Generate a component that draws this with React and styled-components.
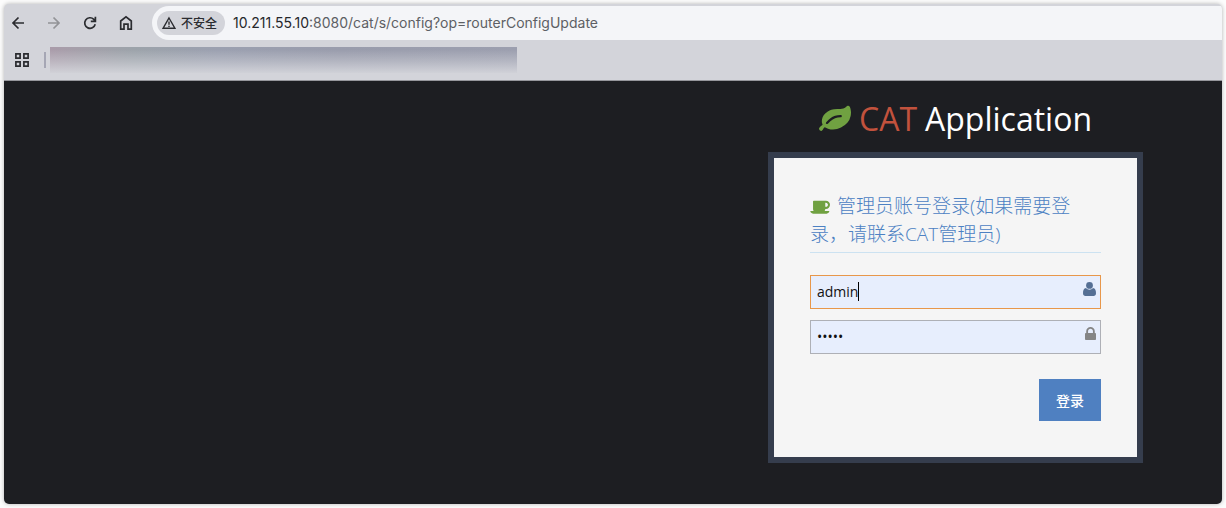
import React, { useState } from "react";
import styled, { createGlobalStyle } from "styled-components";

const Global = createGlobalStyle`
  *, *::before, *::after { box-sizing: border-box; }
  body {
    margin: 0;
    background: #fcfcfc;
    font-family: "Open Sans", "Noto Sans CJK SC", sans-serif;
    font-size: 14px;
  }
`;

const Frame = styled.div`
  min-height: 100vh;
  padding: 4px;
  display: flex;
`;

const Browser = styled.div`
  flex: 1;
  min-width: 0;
  display: flex;
  flex-direction: column;
  border-radius: 5px;
  overflow: hidden;
  background: #d3d4da;
  box-shadow: 0 0 4px rgba(0, 0, 0, 0.3);
`;

const Toolbar = styled.nav`
  display: flex;
  align-items: center;
  padding-top: 2px;
`;

const NavButtons = styled.div`
  display: flex;
  gap: 16px;
  padding: 0 16px 0 4px;
`;

const NavButton = styled.button`
  width: 20px;
  height: 20px;
  padding: 0;
  border: 0;
  background: none;
  display: grid;
  place-items: center;
  color: ${(p) => (p.disabled ? "#929397" : "#2b2c30")};
`;

const AddressBar = styled.div`
  flex: 1;
  min-width: 0;
  height: 34px;
  display: flex;
  align-items: center;
  gap: 8px;
  padding-left: 5px;
  border-radius: 17px 0 0 17px;
  background: #f4f5f8;
`;

const SecurityChip = styled.button`
  display: flex;
  flex: none;
  align-items: center;
  gap: 5px;
  height: 24px;
  padding: 0 8px 0 5px;
  border: 0;
  border-radius: 12px;
  background: #d3d4da;
  color: #2b2c30;
  font: 500 12px/24px "Noto Sans CJK SC", sans-serif;
`;

const Url = styled.span`
  flex: 1;
  min-width: 0;
  overflow: hidden;
  white-space: nowrap;
  font: 14px/20px Inter, sans-serif;
  color: #5d5f64;
`;

const Host = styled.span`
  color: #26272b;
`;

const Bookmarks = styled.div`
  height: 41px;
  display: flex;
  align-items: center;
  padding-left: 8px;
  border-bottom: 1px solid #96979c;
`;

const Separator = styled.span`
  width: 2px;
  height: 16px;
  margin: 0 4px 0 12px;
  background: #a5a6b4;
`;

const BookmarkBlur = styled.span`
  width: 467px;
  height: 26px;
  background:
    linear-gradient(to bottom, rgba(211, 212, 218, 0) 10%, rgba(211, 212, 218, 0.45) 55%, rgba(211, 212, 218, 0.95)),
    linear-gradient(to right, #aa9caa, #a3a1aa 9%, #9ca3aa 18%, #9ba0b0 36%, #999cac 62%, #9c9faf);
`;

const Page = styled.main`
  flex: 1;
  display: flex;
  justify-content: flex-end;
  padding: 15px 79px 41px 20px;
  background: #1d1e22;
`;

const Login = styled.div`
  width: 375px;
  max-width: 100%;
`;

const Title = styled.h1`
  display: flex;
  align-items: center;
  justify-content: center;
  gap: 8px;
  margin: 0 0 10px;
  font-size: 32px;
  font-weight: 400;
  line-height: 46px;
  color: #fff;
`;

const Brand = styled.span`
  color: #c2523d;
`;

const Leaf = styled.svg`
  flex: none;
  color: #70a141;
`;

const Card = styled.form`
  padding: 34px 36px 36px;
  border: 6px solid #353d4d;
  background: #f5f5f5;
`;

const Heading = styled.h2`
  margin: 0 0 22px;
  padding-bottom: 4px;
  border-bottom: 1px solid #cce2f1;
  font-size: 19px;
  font-weight: 300;
  line-height: 28px;
  color: #4c81c3;
`;

const Cup = styled.svg`
  margin-right: 6px;
  vertical-align: -2px;
  color: #70a141;
`;

const Field = styled.label`
  position: relative;
  display: block;
  margin-bottom: 11px;
`;

const Input = styled.input`
  display: block;
  width: 100%;
  height: 34px;
  padding: 0 28px 2px 6px;
  border: 1px solid ${(p) => (p.$active ? "#e8974a" : "#aeb0b6")};
  border-radius: 0;
  outline: 0;
  background: #e7eefd;
  color: #111;
  font: 14px/20px "Open Sans", sans-serif;
`;

const FieldIcon = styled.svg`
  position: absolute;
  top: 7px;
  right: 5px;
  color: ${(p) => p.$tone};
`;

const Caret = styled.span`
  position: absolute;
  top: 7px;
  left: 48px;
  width: 1px;
  height: 19px;
  background: #000;
`;

const Actions = styled.div`
  display: flex;
  justify-content: flex-end;
  padding-top: 14px;
`;

const Submit = styled.button`
  width: 62px;
  height: 42px;
  padding: 0;
  border: 0;
  background: #4f80c1;
  color: #fff;
  font: 500 14px/20px "Noto Sans CJK SC", sans-serif;
`;

const stroke = { fill: "none", stroke: "currentColor", strokeWidth: 1.7 };

export default function App() {
  const [user, setUser] = useState("admin");
  const [password, setPassword] = useState("admin");

  return (
    <>
      <Global />
      <Frame>
        <Browser>
          <Toolbar>
            <NavButtons>
              <NavButton type="button" aria-label="后退">
                <svg width="14" height="14" viewBox="0 0 14 14" {...stroke}>
                  <path d="M13 7H2.5M7.5 1.5L2 7L7.5 12.5" />
                </svg>
              </NavButton>
              <NavButton type="button" aria-label="前进" disabled>
                <svg width="14" height="14" viewBox="0 0 14 14" {...stroke}>
                  <path d="M1 7H11.5M6.5 1.5L12 7L6.5 12.5" />
                </svg>
              </NavButton>
              <NavButton type="button" aria-label="重新加载">
                <svg width="14" height="14" viewBox="0 0 14 14" {...stroke}>
                  <path d="M12.2 8.3A5.3 5.3 0 1 1 10.8 3.3L12.2 4.8M12.4 0.8V5.3H7.8" />
                </svg>
              </NavButton>
              <NavButton type="button" aria-label="主页">
                <svg width="14" height="16" viewBox="0 0 14 16" {...stroke}>
                  <path d="M1.7 6L7 1.9L12.3 6V14.1H9V9.2H5V14.1H1.7Z" />
                </svg>
              </NavButton>
            </NavButtons>
            <AddressBar>
              <SecurityChip type="button">
                <svg width="14" height="14" viewBox="0 0 14 14" fill="none" stroke="currentColor" strokeWidth="1.4">
                  <path d="M7 2L13 12.3H1ZM7 5.5V8.8M7 9.8V11" />
                </svg>
                不安全
              </SecurityChip>
              <Url>
                <Host>10.211.55.10</Host>:8080/cat/s/config?op=routerConfigUpdate
              </Url>
            </AddressBar>
          </Toolbar>
          <Bookmarks>
            <NavButton type="button" aria-label="应用">
              <svg width="14" height="14" viewBox="0 0 14 14" {...stroke}>
                <path d="M0.9 0.9H5.1V5.1H0.9ZM8.9 0.9H13.1V5.1H8.9ZM0.9 8.9H5.1V13.1H0.9ZM8.9 8.9H13.1V13.1H8.9Z" />
              </svg>
            </NavButton>
            <Separator />
            <BookmarkBlur />
          </Bookmarks>
          <Page>
            <Login>
              <Title>
                <Leaf width="32" height="32" viewBox="0 100 1792 1792" fill="currentColor" aria-hidden="true">
                  <path d="M1280 832q0-26-19-45t-45-19q-172 0-318 49.5t-259.5 134-235.5 219.5q-19 21-19 45 0 26 19 45t45 19q24 0 45-19 27-24 74-71t67-66q137-124 268.5-176t313.5-52q26 0 45-19t19-45zm512-198q0 95-20 193-46 224-184.5 383t-357.5 268q-214 108-438 108-148 0-286-47-15-5-88-42t-96-37q-16 0-39.5 32t-45 70-52.5 70-60 32q-43 0-63.5-17.5t-45.5-59.5q-2-4-6-11t-5.5-10-3-9.5-1.5-13.5q0-35 31-73.5t68-65.5 68-56 31-48q0-4-14-38t-16-44q-9-51-9-104 0-115 43.5-220t119-184.5 170.5-139 204-95.5q55-18 145-25.5t179.5-9 178.5-6 163.5-24 113.5-56.5l29.5-29.5 29.5-28 27-20 36.5-16 43.5-4.5q39 0 70.5 46t47.5 112 24 124 8 96z" />
                </Leaf>
                <Brand>CAT</Brand>
                <span>Application</span>
              </Title>
              <Card onSubmit={(e) => e.preventDefault()}>
                <Heading>
                  <Cup width="21" height="19" viewBox="0 0 1920 1792" fill="currentColor" aria-hidden="true">
                    <path d="M1664 832q0-80-56-136t-136-56h-64v384h64q80 0 136-56t56-136zm-1664 576h1792q0 106-75 181t-181 75h-1280q-106 0-181-75t-75-181zm1856-576q0 159-112.5 271.5t-271.5 112.5h-64v32q0 92-66 158t-158 66h-704q-92 0-158-66t-66-158v-736q0-26 19-45t45-19h1152q159 0 271.5 112.5t112.5 271.5z" />
                  </Cup>
                  管理员账号登录(如果需要登录，请联系CAT管理员)
                </Heading>
                <Field>
                  <Input
                    $active
                    aria-label="用户名"
                    value={user}
                    onChange={(e) => setUser(e.target.value)}
                  />
                  <Caret />
                  <FieldIcon $tone="#556f94" width="13" height="14" viewBox="0 0 13 14" fill="currentColor" aria-hidden="true">
                    <circle cx="6.5" cy="3.4" r="3.4" />
                    <path d="M3 6C4.8 8.2 8.2 8.2 10 6C12.3 6.4 13 8.6 13 11.2C13 13 12 14 10.5 14H2.5C1 14 0 13 0 11.2C0 8.6 0.7 6.4 3 6Z" />
                  </FieldIcon>
                </Field>
                <Field>
                  <Input
                    type="password"
                    aria-label="密码"
                    value={password}
                    onChange={(e) => setPassword(e.target.value)}
                  />
                  <FieldIcon $tone="#858585" width="11" height="13" viewBox="320 128 1152 1408" preserveAspectRatio="none" fill="currentColor" aria-hidden="true">
                    <path d="M640 768h512v-192q0-106-75-181t-181-75-181 75-75 181v192zm832 96v576q0 40-28 68t-68 28h-960q-40 0-68-28t-28-68v-576q0-40 28-68t68-28h32v-192q0-184 132-316t316-132 316 132 132 316v192h32q40 0 68 28t28 68z" />
                  </FieldIcon>
                </Field>
                <Actions>
                  <Submit type="submit">登录</Submit>
                </Actions>
              </Card>
            </Login>
          </Page>
        </Browser>
      </Frame>
    </>
  );
}
